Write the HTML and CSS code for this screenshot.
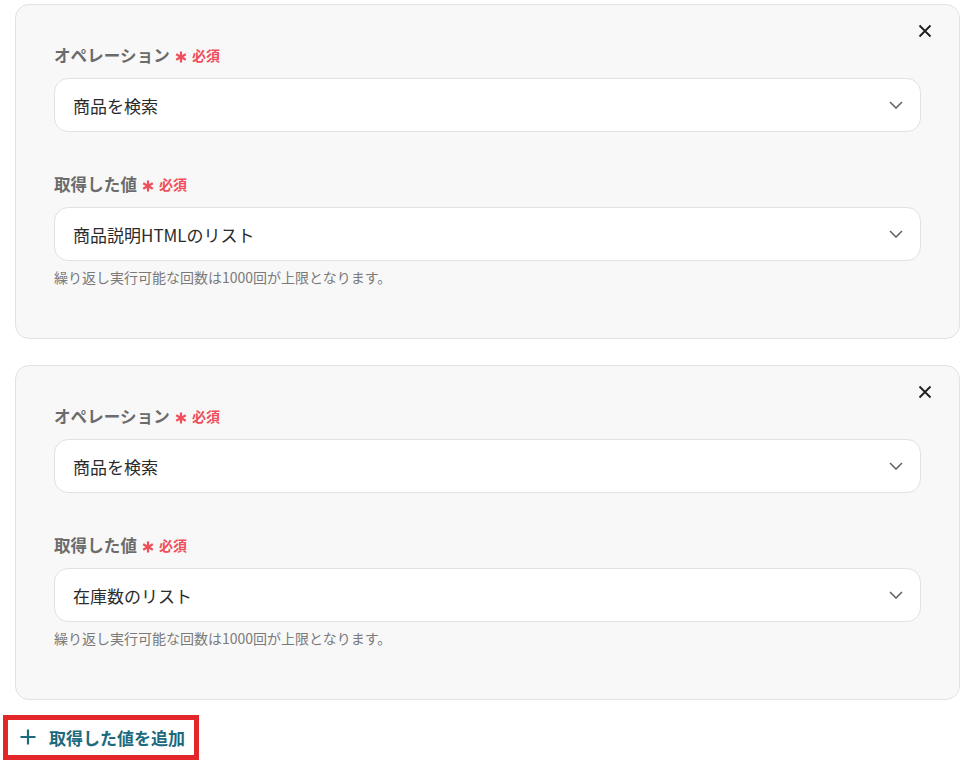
FILE: index.html
```html
<!DOCTYPE html>
<html lang="ja">
<head>
<meta charset="utf-8">
<link rel="stylesheet" href="styles.css">
</head>
<body>
<div class="page">
  <div class="card">
    <button class="close" aria-label="閉じる">
      <svg width="14" height="14" viewBox="0 0 14 14"><path d="M1.5 1.5L12.5 12.5M12.5 1.5L1.5 12.5" stroke="#1e1e1e" stroke-width="1.8" fill="none"/></svg>
    </button>
    <div class="field">
      <div class="label">オペレーション<span class="req"><svg class="ast" width="12" height="12" viewBox="0 0 12 12"><path d="M6 0.5V11.5M1.2 3.25L10.8 8.75M10.8 3.25L1.2 8.75" stroke="#ef4f5c" stroke-width="2.2" fill="none"/></svg>必須</span></div>
      <div class="select"><span>商品を検索</span><svg width="14" height="8" viewBox="0 0 14 8"><path d="M1 1L7 7L13 1" stroke="#666" stroke-width="1.6" fill="none"/></svg></div>
    </div>
    <div class="field">
      <div class="label">取得した値<span class="req"><svg class="ast" width="12" height="12" viewBox="0 0 12 12"><path d="M6 0.5V11.5M1.2 3.25L10.8 8.75M10.8 3.25L1.2 8.75" stroke="#ef4f5c" stroke-width="2.2" fill="none"/></svg>必須</span></div>
      <div class="select"><span>商品説明HTMLのリスト</span><svg width="14" height="8" viewBox="0 0 14 8"><path d="M1 1L7 7L13 1" stroke="#666" stroke-width="1.6" fill="none"/></svg></div>
      <div class="help">繰り返し実行可能な回数は1000回が上限となります。</div>
    </div>
  </div>
  <div class="card">
    <button class="close" aria-label="閉じる">
      <svg width="14" height="14" viewBox="0 0 14 14"><path d="M1.5 1.5L12.5 12.5M12.5 1.5L1.5 12.5" stroke="#1e1e1e" stroke-width="1.8" fill="none"/></svg>
    </button>
    <div class="field">
      <div class="label">オペレーション<span class="req"><svg class="ast" width="12" height="12" viewBox="0 0 12 12"><path d="M6 0.5V11.5M1.2 3.25L10.8 8.75M10.8 3.25L1.2 8.75" stroke="#ef4f5c" stroke-width="2.2" fill="none"/></svg>必須</span></div>
      <div class="select"><span>商品を検索</span><svg width="14" height="8" viewBox="0 0 14 8"><path d="M1 1L7 7L13 1" stroke="#666" stroke-width="1.6" fill="none"/></svg></div>
    </div>
    <div class="field">
      <div class="label">取得した値<span class="req"><svg class="ast" width="12" height="12" viewBox="0 0 12 12"><path d="M6 0.5V11.5M1.2 3.25L10.8 8.75M10.8 3.25L1.2 8.75" stroke="#ef4f5c" stroke-width="2.2" fill="none"/></svg>必須</span></div>
      <div class="select"><span>在庫数のリスト</span><svg width="14" height="8" viewBox="0 0 14 8"><path d="M1 1L7 7L13 1" stroke="#666" stroke-width="1.6" fill="none"/></svg></div>
      <div class="help">繰り返し実行可能な回数は1000回が上限となります。</div>
    </div>
  </div>
  <button class="add">
    <svg width="16" height="16" viewBox="0 0 16 16"><path d="M8 0.5V15.5M0.5 8H15.5" stroke="#1d6a7e" stroke-width="2.2" fill="none"/></svg>
    <span>取得した値を追加</span>
  </button>
</div>
</body>
</html>
```

FILE: styles.css
```css
* { box-sizing: border-box; }
body {
  margin: 0;
  background: #ffffff;
  font-family: "Noto Sans CJK JP", "Noto Sans", sans-serif;
}
.page {
  padding: 4px 16px 0 15px;
}
.card {
  position: relative;
  background: #f8f8f8;
  border: 1px solid #e2e2e2;
  border-radius: 14px;
  padding: 39px 38px 51px;
  margin-bottom: 26px;
}
.close {
  position: absolute;
  top: 16px;
  right: 24px;
  width: 20px;
  height: 20px;
  padding: 0;
  border: 0;
  background: none;
  display: flex;
  align-items: center;
  justify-content: center;
}
.field + .field {
  margin-top: 41px;
}
.label {
  display: flex;
  align-items: center;
  height: 22px;
  font-size: 16.5px;
  font-weight: 700;
  color: #6b6b6b;
  letter-spacing: 0.1px;
}
.req {
  display: inline-flex;
  align-items: center;
  margin-left: 5px;
  font-size: 14px;
  font-weight: 700;
  color: #ef4f5c;
}
.ast {
  margin-right: 5px;
  margin-top: 3px;
}
.select {
  margin-top: 12px;
  height: 54px;
  background: #ffffff;
  border: 1px solid #e1e1e6;
  border-radius: 14px;
  padding: 0 17px 0 18px;
  display: flex;
  align-items: center;
  justify-content: space-between;
  font-size: 17px;
  color: #2b2b2b;
}
.help {
  margin-top: 6px;
  font-size: 14px;
  line-height: 20px;
  color: #7a7a7a;
}
.add {
  margin: -13px 0 0 -12px;
  display: inline-flex;
  align-items: center;
  height: 45px;
  width: 196px;
  border: 5px solid #e3262a;
  background: #ffffff;
  padding: 0 0 0 12px;
  gap: 13px;
  font-family: inherit;
  font-size: 17px;
  font-weight: 700;
  color: #1d6a7e;
}
```
